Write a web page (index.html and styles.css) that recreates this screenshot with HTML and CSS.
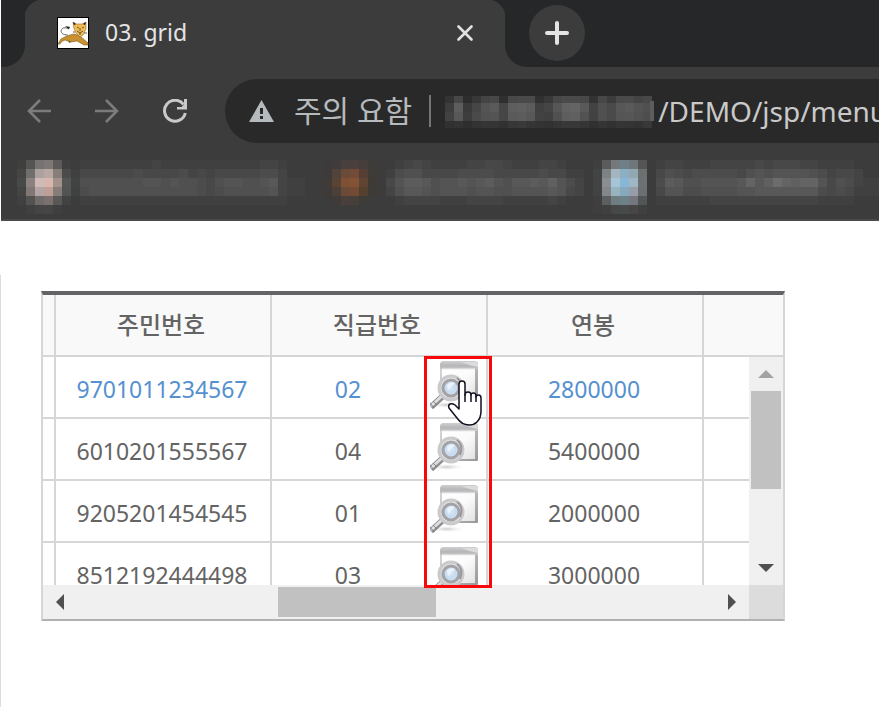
FILE: index.html
```html
<!DOCTYPE html>
<html lang="ko">
<head>
<meta charset="utf-8">
<meta name="viewport" content="width=device-width, initial-scale=1">
<title>03. grid</title>
<link rel="stylesheet" href="styles.css">
</head>
<body>
<svg class="symbols" aria-hidden="true">
  <defs>
    <linearGradient id="bar" x1="0" y1="0" x2="0" y2="1">
      <stop offset="0" stop-color="#cfcfd1"/><stop offset="0.6" stop-color="#b6b6b9"/><stop offset="1" stop-color="#c8c8ca"/>
    </linearGradient>
    <linearGradient id="pane" x1="0" y1="0" x2="1" y2="1">
      <stop offset="0" stop-color="#ffffff"/><stop offset="0.5" stop-color="#fbfbfb"/><stop offset="1" stop-color="#e2e2e3"/>
    </linearGradient>
    <linearGradient id="frame" x1="0" y1="0" x2="1" y2="1">
      <stop offset="0" stop-color="#dcdcdc"/><stop offset="1" stop-color="#98989a"/>
    </linearGradient>
    <radialGradient id="lens" cx="0.45" cy="0.45" r="0.6">
      <stop offset="0" stop-color="#dae9f9"/><stop offset="0.6" stop-color="#c6daee"/><stop offset="1" stop-color="#e2edf6"/>
    </radialGradient>
    <radialGradient id="shade" cx="0.4" cy="0.5" r="0.6">
      <stop offset="0" stop-color="#c9c9c9"/><stop offset="1" stop-color="#ffffff" stop-opacity="0"/>
    </radialGradient>
    <symbol id="lookup" viewBox="0 0 48 48">
      <ellipse cx="20" cy="44" rx="16" ry="3" fill="url(#shade)"/>
      <rect x="10" y="1" width="38" height="37" rx="1" fill="url(#frame)"/>
      <path d="M12 0h34l2 3v5H10V3z" fill="url(#bar)"/>
      <path d="M31 1h16l1 2v3q-7-1-17-5z" fill="#dbdbdd"/>
      <rect x="12" y="8" width="33" height="28" fill="url(#pane)"/>
      <path d="M12 8h33" stroke="#ececed" stroke-width="1"/>
      <path d="M1 46L13 35" stroke="#8e8e91" stroke-width="6"/>
      <path d="M1 45L13 34" stroke="#dfdfe1" stroke-width="3"/>
      <path d="M0 42l4 5M3 40l4 4" stroke="#808080" stroke-width="1"/>
      <circle cx="21" cy="27" r="12" fill="#dedede" fill-opacity="0.8" stroke="#cacacc" stroke-width="3"/>
      <circle cx="21" cy="27" r="8" fill="url(#lens)" stroke="#a3a3a7" stroke-width="3"/>
      <path d="M27 17q7 5 3 15" fill="none" stroke="#98989c" stroke-width="2"/>
      <path d="M17 24q3-4 8-2l-7 7z" fill="#e9f3fc"/>
    </symbol>
  </defs>
</svg>

<header class="browser">
  <div class="tabs">
    <span class="strip-end strip-left"></span>
    <div class="tab">
      <svg class="favicon" viewBox="0 0 32 32" aria-hidden="true">
        <rect x="0.5" y="0.5" width="31" height="31" fill="#fff" stroke="#000"/>
        <path d="M11 18C3 18 3 13 6 11q3-1 6 1" fill="none" stroke="#666" stroke-width="1"/>
        <path d="M8 9l5 1-1 2zM9 20l5 4-1 2-4-4z" fill="#111"/>
        <path d="M1 27l3-5q5-3 9-4l4-1 6 2 8 7v2h-4l-7-4-6 1-6-2q-4 1-5 4z" fill="#c9902f" stroke="#7c5b22" stroke-width="0.6"/>
        <path d="M16 5l3 2h6l4-2v7l-3 6-3 2-4-4q-3-5-3-11z" fill="#f0bd57" stroke="#91692c" stroke-width="0.6"/>
        <path d="M16 5l3 2-2 1zM29 5l-3 2 2 1z" fill="#111"/>
        <path d="M20 10l2 1M27 10l-2 1M20 14l3 2 3-2M23 11v3M23 16v2M27 16h3M16 15h2" fill="none" stroke="#4c3a18" stroke-width="0.8"/>
      </svg>
      <span class="tab-title">03. grid</span>
      <button class="icon-button close" type="button" aria-label="Close tab">
        <svg viewBox="0 0 16 16"><path d="M1.500 1.500l13 13M14.500 1.500l-13 13" stroke="#e2e2e2" stroke-width="2.600" stroke-linecap="round"/></svg>
      </button>
    </div>
    <div class="strip-end strip-right">
      <button class="icon-button add" type="button" aria-label="New tab">
        <svg viewBox="0 0 24 24"><path d="M12 2v20M2 12h20" stroke="#e4e4e4" stroke-width="4" stroke-linecap="round"/></svg>
      </button>
    </div>
  </div>

  <div class="toolbar">
    <nav class="nav">
      <button class="icon-button" type="button" aria-label="Back">
        <svg viewBox="0 0 24 24"><path d="M24 12H2M13 1L2 12l11 11" fill="none" stroke="#7c7c7c" stroke-width="2.600"/></svg>
      </button>
      <button class="icon-button" type="button" aria-label="Forward">
        <svg viewBox="0 0 24 24"><path d="M0 12h22M11 1l11 11-11 11" fill="none" stroke="#7c7c7c" stroke-width="2.600"/></svg>
      </button>
      <button class="icon-button" type="button" aria-label="Reload">
        <svg viewBox="0 0 24 24"><path d="M20.500 5.500A10.500 10.500 0 1 0 22.300 14" fill="none" stroke="#c9c9c9" stroke-width="3"/><path d="M24 0v10.500H14V8h4.500L21 5.500V0z" fill="#c9c9c9"/></svg>
      </button>
    </nav>
    <div class="address">
      <svg class="warning" viewBox="0 0 25 22" aria-hidden="true"><path fill="#b5babd" fill-rule="evenodd" d="M12.500 0L25 22H0zM11 8v6h3V8zm0 8v3h3v-3z"/></svg>
      <label class="security" for="url">주의 요함</label>
      <svg class="mosaic host" id="host" viewBox="0 0 213 34" aria-hidden="true"></svg>
      <input class="url" id="url" type="text" value="/DEMO/jsp/menu" readonly>
    </div>
  </div>

  <div class="bookmarks">
    <svg class="mosaic" id="bookmarks" width="864" height="54" viewBox="0 0 864 54" aria-hidden="true"></svg>
  </div>
</header>

<main class="page">
  <div class="grid">
    <div class="viewport">
      <table class="data">
        <colgroup><col class="edge"><col><col><col><col class="rest"></colgroup>
        <thead>
          <tr><th></th><th scope="col">주민번호</th><th scope="col">직급번호</th><th scope="col">연봉</th><th></th></tr>
        </thead>
        <tbody>
          <tr class="selected"><td></td><td>9701011234567</td><td><div class="picker"><span>02</span><button class="icon-button" type="button" aria-label="02"><svg><use href="#lookup"/></svg></button></div></td><td>2800000</td><td></td></tr>
          <tr><td></td><td>6010201555567</td><td><div class="picker"><span>04</span><button class="icon-button" type="button" aria-label="04"><svg><use href="#lookup"/></svg></button></div></td><td>5400000</td><td></td></tr>
          <tr><td></td><td>9205201454545</td><td><div class="picker"><span>01</span><button class="icon-button" type="button" aria-label="01"><svg><use href="#lookup"/></svg></button></div></td><td>2000000</td><td></td></tr>
          <tr><td></td><td>8512192444498</td><td><div class="picker"><span>03</span><button class="icon-button" type="button" aria-label="03"><svg><use href="#lookup"/></svg></button></div></td><td>3000000</td><td></td></tr>
        </tbody>
      </table>
      <div class="scroll-y">
        <button class="icon-button arrow" type="button" aria-label="Up"><svg viewBox="0 0 16 8"><path d="M0 8L8 0l8 8z" fill="#a3a3a3"/></svg></button>
        <div class="thumb"></div>
        <button class="icon-button arrow" type="button" aria-label="Down"><svg viewBox="0 0 16 8"><path d="M0 0l8 8 8-8z" fill="#505050"/></svg></button>
      </div>
    </div>
    <div class="scroll-x">
      <button class="icon-button arrow" type="button" aria-label="Left"><svg viewBox="0 0 8 16"><path d="M8 0L0 8l8 8z" fill="#505050"/></svg></button>
      <div class="track"><div class="thumb"></div></div>
      <button class="icon-button arrow" type="button" aria-label="Right"><svg viewBox="0 0 8 16"><path d="M0 0l8 8-8 8z" fill="#505050"/></svg></button>
      <span class="corner"></span>
    </div>
    <div class="highlight"></div>
    <svg class="pointer" viewBox="0 0 34 46" aria-hidden="true">
      <path d="M11 29V4q0-3 3-3t3 3v11q0-3 3-3t3 3q0-2 2.500-2T28 16v1q0-2 2.500-2T33 18v13q0 7-4 11-3 3-8 3-7 0-12-7L1 28q-1-3 1-4 2-1 5 1z" fill="#fff" stroke="#101020" stroke-width="1.500" stroke-linejoin="round"/>
      <path d="M17 14v8M23 15v7M28 16v6" stroke="#101020" stroke-width="1.500"/>
    </svg>
  </div>
</main>
<script src="mosaic.js"></script>
</body>
</html>
```

FILE: styles.css
```css
* {
  box-sizing: border-box;
}

body {
  margin: 0;
  min-height: 100vh;
  display: flex;
  flex-direction: column;
  overflow-x: hidden;
  background: #fff;
  color: #646464;
  font-family: "Noto Sans", "Noto Sans CJK KR", sans-serif;
  font-size: 23px;
}

.symbols {
  position: absolute;
  width: 0;
  height: 0;
}

.icon-button {
  display: flex;
  flex: none;
  align-items: center;
  justify-content: center;
  width: 24px;
  height: 24px;
  padding: 0;
  border: 0;
  background: none;
}

.icon-button svg {
  display: block;
  width: 100%;
  height: 100%;
}

/* Browser window */
.browser {
  margin-left: 1px;
  overflow: hidden;
  background: #3c3c3c;
  border-bottom: 2px solid #4a4849;
}

.tabs {
  display: flex;
  height: 67px;
  background: #3c3c3c;
}

.strip-end {
  background: #252729;
}

.strip-left {
  width: 24px;
  border-bottom-right-radius: 22px;
}

.strip-right {
  flex: 1;
  padding: 5px 24px;
  border-bottom-left-radius: 22px;
}

.tab {
  position: relative;
  display: flex;
  align-items: center;
  gap: 16px;
  width: 480px;
  padding: 0 32px 1px;
  background: #3c3c3c;
}

.tab::before,
.tab::after {
  content: "";
  position: absolute;
  top: 0;
  width: 18px;
  height: 18px;
}

.tab::before {
  left: 0;
  background: radial-gradient(circle at 100% 100%, #3c3c3c 18px, #252729 19px);
}

.tab::after {
  right: 0;
  background: radial-gradient(circle at 0 100%, #3c3c3c 18px, #252729 19px);
}

.favicon {
  width: 32px;
  height: 32px;
}

.tab-title {
  flex: 1;
  padding-bottom: 2px;
  color: #e4e4e4;
  font-size: 23px;
  line-height: 32px;
}

.close {
  width: 16px;
  height: 16px;
}

.add {
  width: 56px;
  height: 56px;
  border-radius: 50%;
  background: #3c3c3c;
}

.add svg {
  width: 24px;
  height: 24px;
}

.toolbar {
  display: flex;
  align-items: center;
  gap: 38px;
  padding: 12px 0 12px 26px;
}

.nav {
  display: flex;
  gap: 44px;
}

.address {
  display: flex;
  flex: 1;
  align-items: center;
  min-width: 0;
  height: 64px;
  padding-left: 24px;
  border-radius: 32px 0 0 32px;
  background: #292929;
  font-size: 28px;
}

.warning {
  flex: none;
  width: 25px;
  height: 22px;
  margin-right: 20px;
}

.security {
  flex: none;
  margin-right: 14px;
  padding-right: 17px;
  border-right: 2px solid #747576;
  color: #b5babd;
  font-size: 30px;
  line-height: 32px;
}

.host {
  flex: none;
  width: 213px;
  height: 34px;
}

.url {
  flex: 1;
  min-width: 0;
  height: 48px;
  padding: 0;
  border: 0;
  outline: 0;
  background: none;
  color: #c9c9c9;
  font: inherit;
}

.mosaic {
  display: block;
  shape-rendering: crispEdges;
}

.bookmarks {
  padding: 5px 0 5px 16px;
}

/* Page with the data grid */
.page {
  flex: 1;
  margin-top: 54px;
  padding: 16px 40px;
  border-left: 1px solid #dcdcdc;
}

.grid {
  position: relative;
  width: 100%;
  max-width: 744px;
  border: 2px solid #d6d6d6;
  border-top: 4px solid #646466;
  border-bottom-color: #b3b0b2;
}

.viewport {
  position: relative;
  height: 290px;
  overflow: hidden;
}

.data {
  width: 100%;
  table-layout: fixed;
  border-collapse: separate;
  border-spacing: 0;
}

.edge {
  width: 13px;
}

.rest {
  width: 79px;
}

.data th,
.data td {
  height: 62px;
  padding: 4px 2px 0 0;
  border-right: 2px solid #d6d6d6;
  border-bottom: 2px solid #d6d6d6;
  text-align: center;
  line-height: 56px;
}

.data th {
  padding: 2px 4px 2px 0;
  background: #f9f9f9;
  font-size: 24px;
  font-weight: 500;
}

.data tr > :last-child {
  border-right: 0;
}

.selected {
  color: #5590d0;
}

.picker {
  display: flex;
  align-items: flex-start;
  gap: 6px;
  height: 56px;
  padding-right: 6px;
}

.picker span {
  flex: 1;
}

.picker .icon-button {
  width: 48px;
  height: 48px;
}

.scroll-y {
  position: absolute;
  top: 62px;
  right: 0;
  bottom: 0;
  display: flex;
  flex-direction: column;
  align-items: center;
  width: 34px;
  background: #f0f0f0;
}

.scroll-y .thumb {
  width: 30px;
  height: 98px;
  margin-bottom: auto;
  background: #c1c1c1;
}

.scroll-y .arrow,
.scroll-x .arrow {
  width: 34px;
  height: 34px;
}

.scroll-y .arrow svg {
  width: 16px;
  height: 8px;
}

.scroll-x {
  display: flex;
  align-items: center;
  height: 34px;
  background: #f0f0f0;
}

.scroll-x .arrow svg {
  width: 8px;
  height: 16px;
}

.track {
  display: flex;
  flex: 1;
  justify-content: center;
  padding-right: 78px;
}

.track .thumb {
  width: 158px;
  height: 30px;
  background: #c1c1c1;
}

.corner {
  width: 34px;
  height: 34px;
  background: #dcdcdc;
}

.highlight {
  position: absolute;
  top: 61px;
  left: 381px;
  width: 68px;
  height: 232px;
  border: 3px solid #f80808;
}

.pointer {
  position: absolute;
  top: 85px;
  left: 405px;
  width: 34px;
  height: 46px;
}
```

FILE: mosaic.js
```js
const NS = "http://www.w3.org/2000/svg";

function cell(svg, x, y, w, h, fill) {
  const r = document.createElementNS(NS, "rect");
  r.setAttribute("x", x);
  r.setAttribute("y", y);
  r.setAttribute("width", w);
  r.setAttribute("height", h);
  r.setAttribute("fill", fill);
  svg.append(r);
}

// Grey level per character: 0 is the bar colour, each step is a little lighter.
function grey(ch) {
  const v = 60 + parseInt(ch, 16) * 4;
  return `rgb(${v},${v},${v})`;
}

const bar = document.getElementById("bookmarks");

const labels = [
  [7, [
    "1111111121111111111122100",
    "3333334333342323333344200",
    "5555555665655435665567211",
    "4555555555555434555556211",
    "1111111111111111111111100",
    "0000000000000000000000000"]],
  [41, [
    "0123211112233211122100",
    "1455333344443333343311",
    "3688756676786577879642",
    "2577656665665566667632",
    "0122221112222111112100",
    "0000000000000000000000"]],
  [71, [
    "1221112222232333221111000",
    "3543444443565666654233200",
    "4875566667a79ca9aa6354211",
    "3664455556677777774343111",
    "1111112222222222221111000",
    "0000000000000000000000000"]]
];

for (const [col, rows] of labels) {
  rows.forEach((row, r) => [...row].forEach((ch, i) => {
    cell(bar, (col + i) * 9, r * 9, 9, 9, grey(ch));
  }));
}

const icons = [
  [0, [
    "3f3f3e 555453 757372 7d7875 5c5b59 404040 3d3d3d",
    "454542 716f6d ada1a0 b8a7a3 867e79 4a4b4a 404040",
    "464a4a 8b8280 d0bab8 d8b5ad a3928b 545655 404342",
    "444442 817876 b4a4a5 bd9f98 867d78 525453 404141",
    "404040 545251 706b6b 7c706e 5a5856 424242 3c3c3c",
    "3c3c3c 404040 444444 454545 3f3f3f 3c3c3c 3c3c3c"]],
  [34, [
    "3c3b3b 3f3c3b 48403c 4a3f3c 453e3a 3d3c38",
    "3d3a39 50443a 6b4a38 724c36 553f35 3f3b36",
    "403a39 5b4334 7f5034 845234 5f4434 3f3a34",
    "3d3a38 4b4037 6b4a38 734a34 54402f 3e3a36",
    "3c3b3b 403b39 4a3f3a 463f3a 3d3c38 3c3c3b"]],
  [64, [
    "3f3f3f 5a5b5b 75797b 6f7f87 70777c 545656",
    "424343 7d8284 a3b5be 8bb0c4 92a9b1 6c7070",
    "424343 8a8e91 a6c4d8 86b8d6 9fb6c4 6c7274",
    "424343 838789 98b3c0 86a9be 969ca8 6b6f72",
    "3f3f3f 5b5f5f 6f7c80 6d8189 76777e 525656",
    "3e3e3e 404040 464848 464a4b 464646 404040"]]
];

for (const [col, rows] of icons) {
  rows.forEach((row, r) => row.split(" ").forEach((hex, i) => {
    cell(bar, (col + i) * 9, r * 9, 9, 9, "#" + hex);
  }));
}

const host = document.getElementById("host");
const hostRows = [
  [2, 7, "33 47 2d 37 44 48 2f 48 4a 4a 30 38 47 4a 4a 48 33 47 3c 4a 4a 44 48"],
  [9, 9, "3d 5d 3a 46 54 5a 46 5e 60 5c 40 45 56 62 64 59 43 50 4a 57 5a 54 50"],
  [18, 9, "42 58 3d 4a 52 54 46 5a 5c 58 42 40 50 5e 60 52 42 50 4a 55 56 52 4d"],
  [27, 7, "31 33 2e 33 35 34 31 37 39 35 33 31 35 38 38 35 30 34 31 35 34 32 38"]
];

for (const [y, h, row] of hostRows) {
  row.split(" ").forEach((v, i) => cell(host, i * 9, y, 9, h, "#" + v + v + v));
}
cell(host, 205, 7, 4, 20, "#5e5d5c");
```
